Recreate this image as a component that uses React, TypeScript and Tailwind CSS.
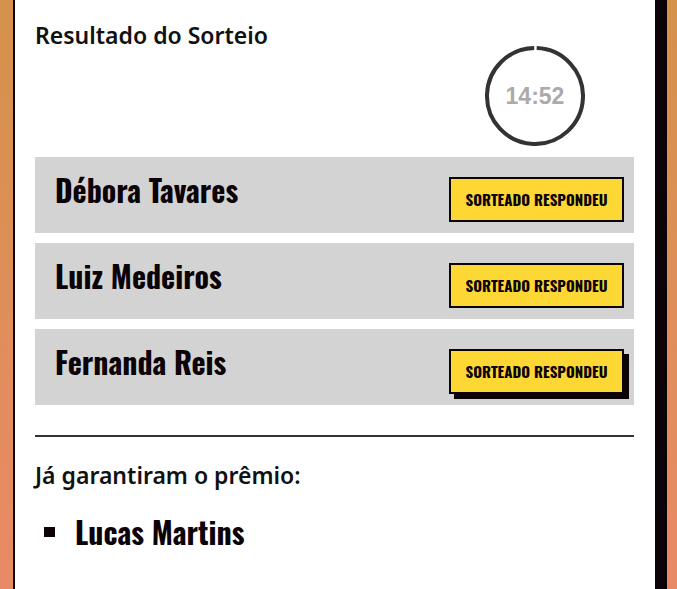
import React from "react";

const sorteados = ["Débora Tavares", "Luiz Medeiros", "Fernanda Reis"];
const garantidos = ["Lucas Martins"];

const condensed = "font-['Oswald','Liberation_Sans_Narrow','DejaVu_Sans_Condensed',sans-serif]";

function Timer() {
  const r = 48;
  const c = 2 * Math.PI * r;
  return (
    <div className="relative w-[100px] h-[100px]">
      <svg width="100" height="100" viewBox="0 0 100 100" className="absolute inset-0">
        <circle
          cx="50"
          cy="50"
          r={r}
          fill="none"
          stroke="#333333"
          strokeWidth="4"
          strokeDasharray={`${c - 3} 3`}
          transform="rotate(-88 50 50)"
        />
      </svg>
      <div className="absolute inset-0 flex items-center justify-center font-['Liberation_Sans',sans-serif] font-bold text-[23px] text-[#aaaaaa]">
        14:52
      </div>
    </div>
  );
}

export default function App() {
  return (
    <div className="min-h-screen bg-gradient-to-b from-[#d4924a] to-[#e98a66] flex">
      <div className="ml-[13px] mr-[10px] flex-1 bg-white border-l-2 border-r-[12px] border-[#0b0308] min-h-screen pl-5 pr-[21px] pt-[19px]">
        <h2 className="font-['Noto_Sans',sans-serif] font-semibold text-[23px] leading-[32px] text-[#111]">
          Resultado do Sorteio
        </h2>

        <div className="flex justify-end pr-[49px] -mt-[5px]">
          <Timer />
        </div>

        <div className="mt-[11px] flex flex-col gap-[10px]">
          {sorteados.map((nome, i) => (
            <div key={nome} className="h-[76px] bg-[#d3d3d3] flex items-center justify-between pl-5 pr-[10px]">
              <span className={`${condensed} font-bold text-[30px] text-[#0b0308] -mt-[11px]`}>{nome}</span>
              <button
                className={`mt-[9px] w-[175px] h-[45px] bg-[#fdd835] border-2 border-[#0b0308] ${condensed} font-bold text-[15px] text-[#0b0308] ${
                  i === 2 ? "shadow-[5px_5px_0_#0b0308]" : ""
                }`}
              >
                SORTEADO RESPONDEU
              </button>
            </div>
          ))}
        </div>

        <hr className="mt-[30px] border-t-2 border-[#333]" />

        <h3 className="mt-[22px] font-['Noto_Sans',sans-serif] font-semibold text-[23px] leading-[32px] text-[#111]">
          Já garantiram o prêmio:
        </h3>

        <ul className="mt-[18px]">
          {garantidos.map((nome) => (
            <li key={nome} className="flex items-center">
              <span className="ml-[9px] w-[11px] h-[10px] bg-[#0b0308]" />
              <span className={`ml-5 ${condensed} font-bold text-[30px] text-[#0b0308]`}>{nome}</span>
            </li>
          ))}
        </ul>
      </div>
    </div>
  );
}
